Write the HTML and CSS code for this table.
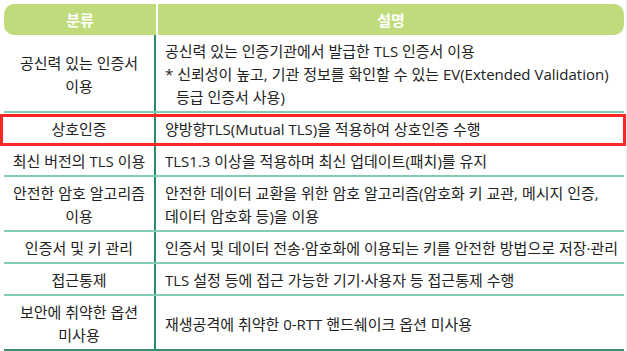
FILE: index.html
```html
<!DOCTYPE html>
<html lang="ko">
<head>
<meta charset="utf-8">
<link rel="stylesheet" href="styles.css">
</head>
<body>
<div class="page">
  <div class="table">
    <div class="head">
      <div class="hcell hleft">분류</div>
      <div class="hcell hright">설명</div>
    </div>
    <div class="row">
      <div class="cat"><div>공신력 있는 인증서<br>이용</div></div>
      <div class="desc"><div>공신력 있는 인증기관에서 발급한 TLS 인증서 이용<br>* 신뢰성이 높고, 기관 정보를 확인할 수 있는 EV(Extended Validation)<br><span class="indent">등급 인증서 사용)</span></div></div>
    </div>
    <div class="row">
      <div class="cat"><div>상호인증</div></div>
      <div class="desc"><div>양방향TLS(Mutual TLS)을 적용하여 상호인증 수행</div></div>
    </div>
    <div class="row">
      <div class="cat"><div>최신 버전의 TLS 이용</div></div>
      <div class="desc"><div>TLS1.3 이상을 적용하며 최신 업데이트(패치)를 유지</div></div>
    </div>
    <div class="row">
      <div class="cat"><div>안전한 암호 알고리즘<br>이용</div></div>
      <div class="desc"><div>안전한 데이터 교환을 위한 암호 알고리즘(암호화 키 교관, 메시지 인증,<br>데이터 암호화 등)을 이용</div></div>
    </div>
    <div class="row">
      <div class="cat"><div>인증서 및 키 관리</div></div>
      <div class="desc"><div>인증서 및 데이터 전송·암호화에 이용되는 키를 안전한 방법으로 저장·관리</div></div>
    </div>
    <div class="row">
      <div class="cat"><div>접근통제</div></div>
      <div class="desc"><div>TLS 설정 등에 접근 가능한 기기·사용자 등 접근통제 수행</div></div>
    </div>
    <div class="row last">
      <div class="cat"><div>보안에 취약한 옵션<br>미사용</div></div>
      <div class="desc"><div>재생공격에 취약한 0-RTT 핸드쉐이크 옵션 미사용</div></div>
    </div>
  </div>
  <div class="highlight"></div>
</div>
</body>
</html>
```

FILE: styles.css
```css
html, body {
  margin: 0;
  padding: 0;
  background: #ffffff;
}
.page {
  position: relative;
  width: 627px;
  height: 351px;
  overflow: hidden;
  font-family: "Open Sans", "Noto Sans CJK KR", sans-serif;
  color: #222222;
  font-size: 15px;
  border-right: 1px solid #ececec;
  box-sizing: border-box;
}
.table {
  margin: 4px 0 0 4px;
  width: 620px;
}
.head {
  display: grid;
  grid-template-columns: 152px 1fr;
  column-gap: 2px;
  height: 31px;
}
.hcell {
  background: #bfdb7b;
  color: #ffffff;
  font-weight: 700;
  display: flex;
  align-items: center;
  justify-content: center;
  font-size: 15px;
}
.hleft {
  border-radius: 10px 0 0 10px;
}
.hright {
  border-radius: 0 10px 10px 0;
}
.row {
  display: grid;
  grid-template-columns: 152px 1fr;
  border-bottom: 2px solid #82ccb3;
}
.row.last {
  border-bottom: 2px solid #2f9470;
}
.cat {
  border-right: 2px solid #2a8b66;
  text-align: center;
  line-height: 23px;
  padding: 5px 0 2px;
  display: flex;
  align-items: center;
  justify-content: center;
}
.desc {
  padding: 5px 0 2px 9px;
  line-height: 23px;
  display: flex;
  align-items: center;
}
.indent {
  padding-left: 11px;
}
.highlight {
  position: absolute;
  left: 0;
  top: 114px;
  width: 626px;
  height: 32px;
  border: 3px solid #ff2626;
  box-sizing: border-box;
}
```
